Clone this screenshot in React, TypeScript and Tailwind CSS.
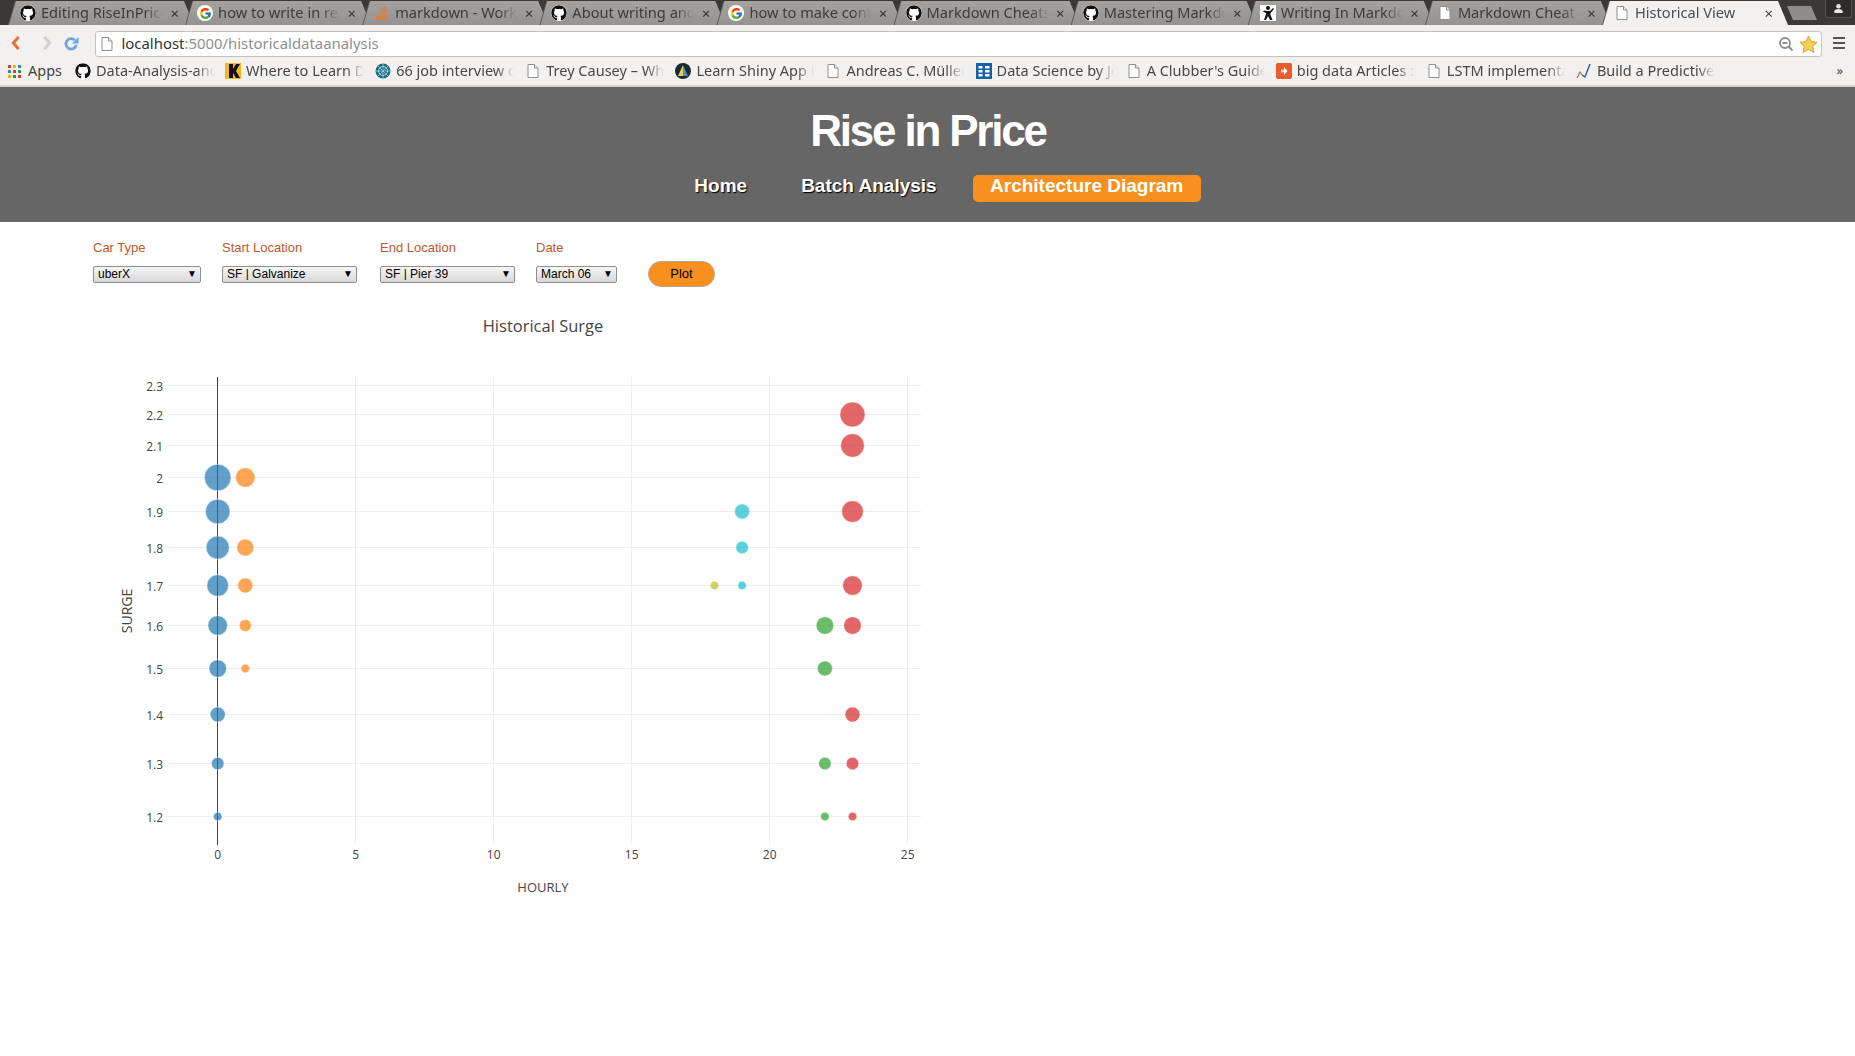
import { ReactNode } from "react";
import { FaGithub, FaStackOverflow } from "react-icons/fa";
import { FcGoogle } from "react-icons/fc";

const GithubIcon = () => <FaGithub className="w-4 h-4 text-[#111] bg-white rounded-full shrink-0" />;

const DocIcon = () => (
  <svg viewBox="0 0 16 16" className="w-4 h-4 shrink-0">
    <path d="M3 1.5h6.5L13 5v9.5H3z" fill="#fff" stroke="#8f8f8f" />
    <path d="M9.5 1.5V5H13" fill="#eee" stroke="#8f8f8f" />
  </svg>
);

const GoogleIcon = () => (
  <span className="w-4 h-4 rounded-full bg-white flex items-center justify-center shrink-0">
    <FcGoogle className="w-[13px] h-[13px]" />
  </span>
);

const StackIcon = () => <FaStackOverflow className="w-4 h-4 text-[#e8792c] shrink-0" />;

const WriterIcon = () => (
  <svg viewBox="0 0 16 16" className="w-4 h-4 shrink-0">
    <rect width="16" height="16" fill="#fff" />
    <circle cx="8" cy="3" r="2" fill="#111" />
    <path d="M4 5.5l3 .5h3l3-3 1 1-3.5 4V10l2 5H10L8 11l-2 4H4l2-6V8L3 6.5z" fill="#111" />
  </svg>
);

const AppsIcon = () => {
  const colors = ["#d8412f", "#f4b400", "#3a7de0", "#3a7de0", "#d8412f", "#0f9d58", "#f4b400", "#0f9d58", "#d8412f"];
  return (
    <span className="grid grid-cols-3 gap-[2px] w-[13px] h-[13px] shrink-0">
      {colors.map((c, i) => (
        <span key={i} className="w-[3px] h-[3px]" style={{ backgroundColor: c }} />
      ))}
    </span>
  );
};

const KIcon = () => (
  <svg viewBox="0 0 16 16" className="w-4 h-4 shrink-0">
    <rect width="16" height="16" fill="#f6b81a" />
    <path d="M4 1h4v5l3-5h4l-4 7 4 7h-4L8 10v5H4z" fill="#111" />
  </svg>
);

const GlobeIcon = () => (
  <svg viewBox="0 0 16 16" className="w-4 h-4 shrink-0">
    <circle cx="8" cy="8" r="7.5" fill="#1b6c82" />
    <circle cx="8" cy="8" r="4.5" fill="none" stroke="#a9d5dc" />
    <path d="M8 1v14M1 8h14M3 3l10 10M13 3L3 13" stroke="#a9d5dc" strokeWidth=".7" />
  </svg>
);

const ShinyIcon = () => (
  <svg viewBox="0 0 16 16" className="w-4 h-4 shrink-0">
    <circle cx="8" cy="8" r="8" fill="#1d2a33" />
    <path d="M8 2l5 11H8z" fill="#4b90c9" />
    <path d="M8 2L3 13h5z" fill="#e9d24f" />
  </svg>
);

const TableIcon = () => (
  <svg viewBox="0 0 16 16" className="w-4 h-4 shrink-0">
    <rect width="16" height="16" fill="#1660a8" />
    <path d="M2.5 3h4v2.5h-4zM9 3h4.5v2.5H9zM2.5 7h4v2.5h-4zM9 7h4.5v2.5H9zM2.5 11h4v2.5h-4zM9 11h4.5v2.5H9z" fill="#fff" />
  </svg>
);

const BigDataIcon = () => (
  <svg viewBox="0 0 16 16" className="w-4 h-4 shrink-0">
    <rect width="16" height="16" rx="2" fill="#e95c2d" />
    <path d="M8 4l3.5 4L8 12z" fill="#fff" />
    <path d="M5 6.5h3v3H5z" fill="#fbc9b5" />
  </svg>
);

const TrendIcon = () => (
  <svg viewBox="0 0 16 16" className="w-4 h-4 shrink-0">
    <path d="M1 15l3-6 2 3" fill="none" stroke="#e0674c" strokeWidth="1.2" />
    <path d="M6 12l3 2 5-13" fill="none" stroke="#1f5f9e" strokeWidth="1.4" />
  </svg>
);

const tabs: { title: string; icon: ReactNode; active?: boolean }[] = [
  { title: "Editing RiseInPrice", icon: <GithubIcon /> },
  { title: "how to write in readme", icon: <GoogleIcon /> },
  { title: "markdown - Working", icon: <StackIcon /> },
  { title: "About writing and", icon: <GithubIcon /> },
  { title: "how to make content", icon: <GoogleIcon /> },
  { title: "Markdown Cheatsheet", icon: <GithubIcon /> },
  { title: "Mastering Markdown", icon: <GithubIcon /> },
  { title: "Writing In Markdown", icon: <WriterIcon /> },
  { title: "Markdown Cheat Sheet", icon: <DocIcon /> },
  { title: "Historical View", icon: <DocIcon />, active: true },
];

const bookmarks: { title: string; icon: ReactNode }[] = [
  { title: "Data-Analysis-and-Visual", icon: <GithubIcon /> },
  { title: "Where to Learn Data", icon: <KIcon /> },
  { title: "66 job interview questions", icon: <GlobeIcon /> },
  { title: "Trey Causey – What", icon: <DocIcon /> },
  { title: "Learn Shiny App Dev", icon: <ShinyIcon /> },
  { title: "Andreas C. Müller's", icon: <DocIcon /> },
  { title: "Data Science by Joe", icon: <TableIcon /> },
  { title: "A Clubber's Guide to", icon: <DocIcon /> },
  { title: "big data Articles : all", icon: <BigDataIcon /> },
  { title: "LSTM implementation", icon: <DocIcon /> },
  { title: "Build a Predictive Model", icon: <TrendIcon /> },
];

function BrowserChrome() {
  return (
    <div className="font-['Noto_Sans',sans-serif]">
      {/* Tab strip */}
      <div className="h-[25px] bg-[#3b3935] flex pl-[9px] overflow-hidden relative">
        {tabs.map((tab) => (
          <div
            key={tab.title}
            className={`relative w-[185px] shrink-0 -ml-[7.9px] first:ml-0 mt-px h-[24px] [filter:drop-shadow(-1px_0_0_#5a5a58)] ${tab.active ? "z-10" : ""}`}
          >
            <div
              className={`h-full flex items-center pl-[11px] pr-[15px] [clip-path:polygon(0_100%,7px_0,175px_0,185px_100%)] ${
                tab.active ? "bg-[#f2f1f0]" : "bg-gradient-to-b from-[#a3a2a0] to-[#949391]"
              }`}
            >
              {tab.icon}
              <span
                className={`ml-[5px] w-[122px] pb-[2px] whitespace-nowrap overflow-hidden text-[14.600px] leading-[20px] [mask-image:linear-gradient(to_right,black_85%,transparent)] ${
                  tab.active ? "text-[#4a4f57]" : "text-[#3d3b38]"
                }`}
              >
                {tab.title}
              </span>
              <span className={`ml-auto text-[15px] leading-none ${tab.active ? "text-[#444]" : "text-[#333]"}`}>×</span>
            </div>
          </div>
        ))}
        <div className="w-[30px] h-[14px] mt-[6px] -ml-[1px] bg-[#8e8d8a] [clip-path:polygon(0_0,24px_0,30px_100%,6px_100%)] shrink-0" />
        <div className="w-[27px] h-[18px] ml-[8px] rounded-b-[3px] bg-[#2f2d2a] border border-[#55534f] border-t-0 flex items-center justify-center shrink-0">
          <svg viewBox="0 0 12 12" className="w-[11px] h-[11px]">
            <circle cx="6" cy="3.5" r="2.5" fill="#e8e8e8" />
            <path d="M1.5 11V9c0-1.5 2-2.5 4.500-2.500s4.500 1 4.500 2.500v2z" fill="#e8e8e8" />
          </svg>
        </div>
      </div>

      {/* Toolbar */}
      <div className="h-[32px] pt-[6px] bg-[#f2f1f0] flex items-center">
        <svg viewBox="0 0 16 20" className="w-[14px] h-[18px] ml-[9px] -mt-[2px]">
          <path d="M11 3L5 10l6 7" fill="none" stroke="#e2733d" strokeWidth="3.500" />
        </svg>
        <svg viewBox="0 0 16 20" className="w-[14px] h-[18px] ml-[17px] -mt-[2px]">
          <path d="M5 3l6 7-6 7" fill="none" stroke="#cfcfcd" strokeWidth="3.500" />
        </svg>
        <svg viewBox="0 0 18 18" className="w-[17px] h-[17px] ml-[9px] -mt-[2px]">
          <path d="M14 10.500a5.500 5.500 0 1 1-1.500-5" fill="none" stroke="#6fa5dc" strokeWidth="3" />
          <path d="M16.500 2v7h-7z" fill="#6fa5dc" />
        </svg>
        <div className="ml-[15px] w-[1727px] h-[26px] bg-white border border-[#c3c2c0] rounded-[3px] flex items-center pl-[3px]">
          <DocIcon />
          <span className="ml-[6.5px] pb-[2px] text-[14.900px] leading-none whitespace-nowrap text-[#333]">
            localhost<span className="text-[#8f8f8f]">:5000/historicaldataanalysis</span>
          </span>
          <svg viewBox="0 0 16 16" className="w-[16px] h-[16px] ml-auto">
            <circle cx="7" cy="7" r="5" fill="none" stroke="#8c8c8c" strokeWidth="1.800" />
            <path d="M4.500 7h5M10.500 10.500l4 4" stroke="#8c8c8c" strokeWidth="1.800" />
          </svg>
          <svg viewBox="0 0 20 20" className="w-[19px] h-[19px] ml-[5px] mr-[3px]">
            <path d="M10 1l2.800 6 6.200.7-4.600 4.300 1.300 6.400L10 15.200 4.300 18.400 5.600 12 1 7.700 7.200 7z" fill="#f6cf57" stroke="#d99c2b" />
          </svg>
        </div>
        <div className="ml-[11px] w-[12px] flex flex-col gap-[3px] -mt-[2px]">
          <span className="h-[2px] bg-[#555]" />
          <span className="h-[2px] bg-[#555]" />
          <span className="h-[2px] bg-[#555]" />
        </div>
      </div>

      {/* Bookmarks */}
      <div className="h-[30px] bg-[#f2f1f0] border-b-2 border-[#d3d2d0] flex items-center pl-[8px]">
        <div className="w-[67px] flex items-center gap-[7px] shrink-0">
          <AppsIcon />
          <span className="text-[14.500px] text-[#444]">Apps</span>
        </div>
        {bookmarks.map((b) => (
          <div key={b.title} className="w-[150.100px] flex items-center gap-[5px] shrink-0">
            {b.icon}
            <span className="w-[118px] whitespace-nowrap overflow-hidden text-[14.500px] text-[#484848] [mask-image:linear-gradient(to_right,black_85%,transparent)]">
              {b.title}
            </span>
          </div>
        ))}
        <span className="ml-auto mr-[12px] text-[13px] text-[#444]">»</span>
      </div>
    </div>
  );
}

function PageHeader() {
  return (
    <header className="h-[135px] bg-[#666666] flex flex-col items-center font-['Liberation_Sans',Arial,sans-serif]">
      <h1 className="mt-[21px] ml-[1px] h-[46px] text-[44px] leading-[46px] font-bold tracking-[-2.200px] text-white">Rise in Price</h1>
      <nav className="mt-[18px] ml-[40px] flex items-center font-bold text-[19px] text-white">
        <a className="pb-[4px] [text-shadow:1px_1px_1px_#000]">Home</a>
        <a className="pb-[4px] ml-[54px] [text-shadow:1px_1px_1px_#000]">Batch Analysis</a>
        <a className="ml-[36px] h-[27px] w-[228px] rounded-[5px] bg-[#f7901e] flex items-center justify-center pb-[4px]">Architecture Diagram</a>
      </nav>
    </header>
  );
}

function Field({ label, width, gap, value, options }: { label: string; width: string; gap: string; value: string; options: string[] }) {
  return (
    <div className={`flex flex-col ${gap}`}>
      <label className="h-[16px] text-[13px] leading-[16px] text-[#c0562a]">{label}</label>
      <div className={`relative mt-[10px] h-[17px] ${width}`}>
        <select
          defaultValue={value}
          className="block appearance-none w-full h-full pl-[4px] pb-[2px] text-[12px] leading-none text-black bg-gradient-to-b from-[#f6f6f6] to-[#d8d8d8] border border-[#8f8f8f] rounded-[2px]"
        >
          {options.map((o) => (
            <option key={o}>{o}</option>
          ))}
        </select>
        <span className="absolute right-[4px] top-[1px] text-[10px] leading-[13px] text-black pointer-events-none">▼</span>
      </div>
    </div>
  );
}

function Filters() {
  return (
    <div className="flex items-end pl-[93px] pt-[18px] font-['Liberation_Sans',Arial,sans-serif]">
      <Field label="Car Type" width="w-[108px]" gap="mr-[21px]" value="uberX" options={["uberX", "uberXL", "uberBLACK"]} />
      <Field label="Start Location" width="w-[135px]" gap="mr-[23px]" value="SF | Galvanize" options={["SF | Galvanize", "SF | Pier 39"]} />
      <Field label="End Location" width="w-[135px]" gap="mr-[21px]" value="SF | Pier 39" options={["SF | Pier 39", "SF | Galvanize"]} />
      <Field label="Date" width="w-[81px]" gap="mr-[31px]" value="March 06" options={["March 06", "March 07"]} />
      <button className="-mb-[4px] w-[67px] h-[26px] rounded-[13px] bg-[#f7901e] border border-[#b9a58d] text-[13px] text-black">Plot</button>
    </div>
  );
}

// pixel rows for each surge level, taken from the plot (the axis is log-like)
const yTicks: [string, number][] = [
  ["2.3", 385.5],
  ["2.2", 414.5],
  ["2.1", 445.5],
  ["2", 477.5],
  ["1.9", 511.5],
  ["1.8", 547.5],
  ["1.7", 585.5],
  ["1.6", 625.5],
  ["1.5", 668.5],
  ["1.4", 714.5],
  ["1.3", 763.5],
  ["1.2", 816.5],
];
const xTicks = [0, 5, 10, 15, 20, 25];
const xPos = (h: number) => 217.7 + h * 27.6;
const yPos = (s: string) => yTicks.find((t) => t[0] === s)![1];

const series: { color: string; hour: number; points: [string, number][] }[] = [
  { color: "#1f77b4", hour: 0, points: [["2", 26], ["1.9", 24], ["1.8", 22.5], ["1.7", 21], ["1.6", 19], ["1.5", 17], ["1.4", 14.5], ["1.3", 12], ["1.2", 8]] },
  { color: "#ff7f0e", hour: 1, points: [["2", 19], ["1.8", 16.5], ["1.7", 14.5], ["1.6", 11.5], ["1.5", 8]] },
  { color: "#bcbd22", hour: 18, points: [["1.7", 8]] },
  { color: "#17becf", hour: 19, points: [["1.9", 14.5], ["1.8", 12], ["1.7", 8]] },
  { color: "#2ca02c", hour: 22, points: [["1.6", 17], ["1.5", 14.5], ["1.3", 12], ["1.2", 8]] },
  { color: "#d62728", hour: 23, points: [["2.2", 24.5], ["2.1", 23], ["1.9", 21], ["1.7", 19], ["1.6", 17], ["1.4", 14.5], ["1.3", 12], ["1.2", 8]] },
];

function SurgeChart() {
  return (
    <svg viewBox="0 310 1000 620" width={1000} height={620} className="block mt-[27px]" fontFamily="'Open Sans', sans-serif">
      <text x={543} y={332} textAnchor="middle" fontSize={16.5} fill="#444">Historical Surge</text>

      {yTicks.map(([label, y]) => (
        <g key={label}>
          <line x1={168} x2={921} y1={y} y2={y} stroke="#eee" />
          <text x={163} y={y + 5.5} textAnchor="end" fontSize={12} fill="#444">{label}</text>
        </g>
      ))}
      {xTicks.map((h) => (
        <g key={h}>
          {h > 0 && <line x1={Math.floor(xPos(h)) + 0.5} x2={Math.floor(xPos(h)) + 0.5} y1={377} y2={845} stroke="#eee" />}
          <text x={xPos(h)} y={858.5} textAnchor="middle" fontSize={12} fill="#444">{h}</text>
        </g>
      ))}
      <line x1={217.5} x2={217.5} y1={377} y2={845} stroke="#444" />

      {series.map((s) =>
        s.points.map(([surge, d]) => (
          <circle
            key={`${s.hour}-${surge}`}
            cx={xPos(s.hour)}
            cy={yPos(surge)}
            r={d / 2 + 0.3}
            fill={s.color}
            fillOpacity={0.7}
            stroke="#fff"
            strokeOpacity={0.5}
          />
        ))
      )}

      <text x={543} y={892} textAnchor="middle" fontSize={13} fill="#444">HOURLY</text>
      <text transform="translate(131.500 611) rotate(-90)" textAnchor="middle" fontSize={14} fill="#444">SURGE</text>
    </svg>
  );
}

export default function App() {
  return (
    <div className="min-h-[1056px] bg-white overflow-hidden">
      <BrowserChrome />
      <PageHeader />
      <Filters />
      <SurgeChart />
    </div>
  );
}
